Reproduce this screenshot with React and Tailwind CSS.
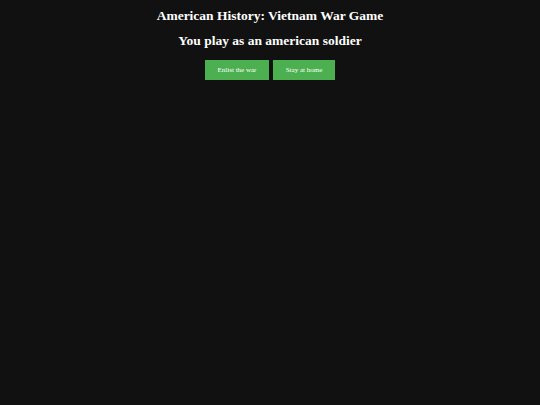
export default function App() {
  return (
    <div className="min-h-screen bg-[#111111] text-white flex flex-col items-center font-['Liberation_Serif',serif]">
      <h1 className="text-[13.5px] leading-[16px] font-bold mt-[8px]">American History: Vietnam War Game</h1>
      <h2 className="text-[13.5px] leading-[16px] font-bold mt-[9px]">You play as an american soldier</h2>
      <div className="flex gap-[4px] mt-[11px]">
        <button className="bg-[#4caf50] text-white text-[7px] font-normal w-[64px] h-[20px]">Enlist the war</button>
        <button className="bg-[#4caf50] text-white text-[7px] font-normal w-[62px] h-[20px]">Stay at home</button>
      </div>
    </div>
  );
}
